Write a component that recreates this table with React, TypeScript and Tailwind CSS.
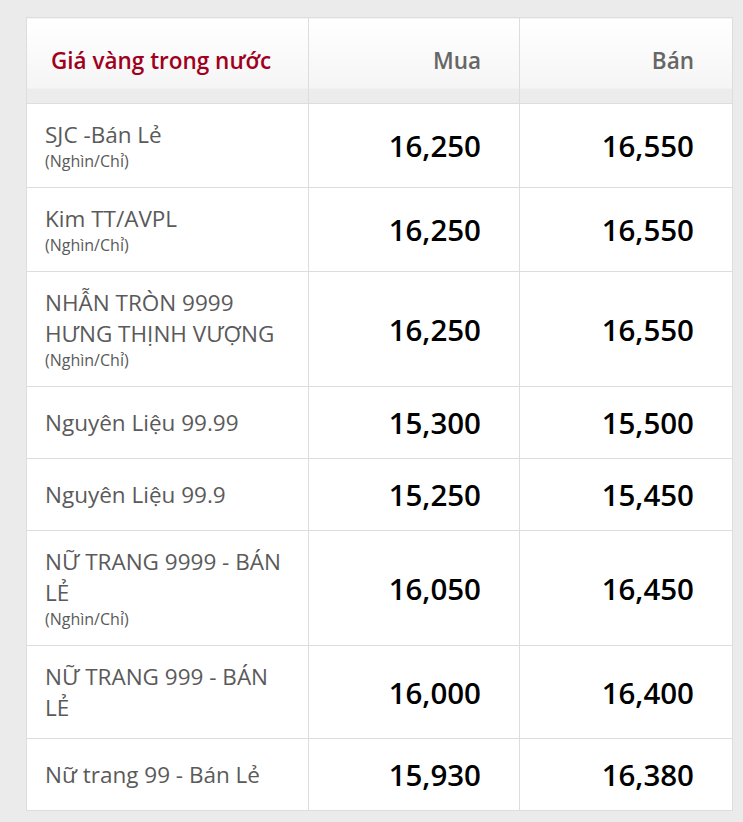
import React from "react";

type Row = { name: string[]; unit?: boolean; buy: string; sell: string };

const rows: Row[] = [
  { name: ["SJC -Bán Lẻ"], unit: true, buy: "16,250", sell: "16,550" },
  { name: ["Kim TT/AVPL"], unit: true, buy: "16,250", sell: "16,550" },
  { name: ["NHẪN TRÒN 9999", "HƯNG THỊNH VƯỢNG"], unit: true, buy: "16,250", sell: "16,550" },
  { name: ["Nguyên Liệu 99.99"], buy: "15,300", sell: "15,500" },
  { name: ["Nguyên Liệu 99.9"], buy: "15,250", sell: "15,450" },
  { name: ["NỮ TRANG 9999 - BÁN", "LẺ"], unit: true, buy: "16,050", sell: "16,450" },
  { name: ["NỮ TRANG 999 - BÁN", "LẺ"], buy: "16,000", sell: "16,400" },
  { name: ["Nữ trang 99 - Bán Lẻ"], buy: "15,930", sell: "16,380" },
];

export default function App() {
  return (
    <div className="min-h-[822px] w-full bg-[#ebebeb] pt-[17px] pl-[26px] font-['Open_Sans',sans-serif]">
      <table className="w-[706px] table-fixed border-collapse bg-white">
        <colgroup>
          <col className="w-[282px]" />
          <col className="w-[211px]" />
          <col className="w-[213px]" />
        </colgroup>
        <thead>
          <tr className="h-[86px]">
            <th className="border border-[#dddddd] bg-[linear-gradient(to_bottom,#ffffff_0px,#f5f5f5_70px,#ececec_70px,#ececec_100%)] pl-[24px] text-left align-middle text-[22.5px] font-semibold leading-[30px] text-[#a0001c]">
              Giá vàng trong nước
            </th>
            <th className="border border-[#dddddd] bg-[linear-gradient(to_bottom,#ffffff_0px,#f5f5f5_70px,#ececec_70px,#ececec_100%)] pr-[38px] text-right align-middle text-[22.5px] font-semibold leading-[30px] text-[#666666]">
              Mua
            </th>
            <th className="border border-[#dddddd] bg-[linear-gradient(to_bottom,#ffffff_0px,#f5f5f5_70px,#ececec_70px,#ececec_100%)] pr-[38px] text-right align-middle text-[22.5px] font-semibold leading-[30px] text-[#666666]">
              Bán
            </th>
          </tr>
        </thead>
        <tbody>
          {rows.map((r, i) => (
            <tr key={i}>
              <td className="border border-[#dddddd] pl-[18px] pr-[10px] py-[15px] align-middle text-[#5a5a5a]">
                {r.name.map((n, j) => (
                  <div key={j} className="text-[22.5px] leading-[31px]">
                    {n}
                  </div>
                ))}
                {r.unit && <div className="text-[16px] leading-[22px]">(Nghìn/Chỉ)</div>}
              </td>
              <td className="border border-[#dddddd] py-[15px] pr-[38px] text-right align-middle text-[29.5px] font-semibold leading-[41px] text-black">
                {r.buy}
              </td>
              <td className="border border-[#dddddd] py-[15px] pr-[38px] text-right align-middle text-[29.5px] font-semibold leading-[41px] text-black">
                {r.sell}
              </td>
            </tr>
          ))}
        </tbody>
      </table>
    </div>
  );
}
